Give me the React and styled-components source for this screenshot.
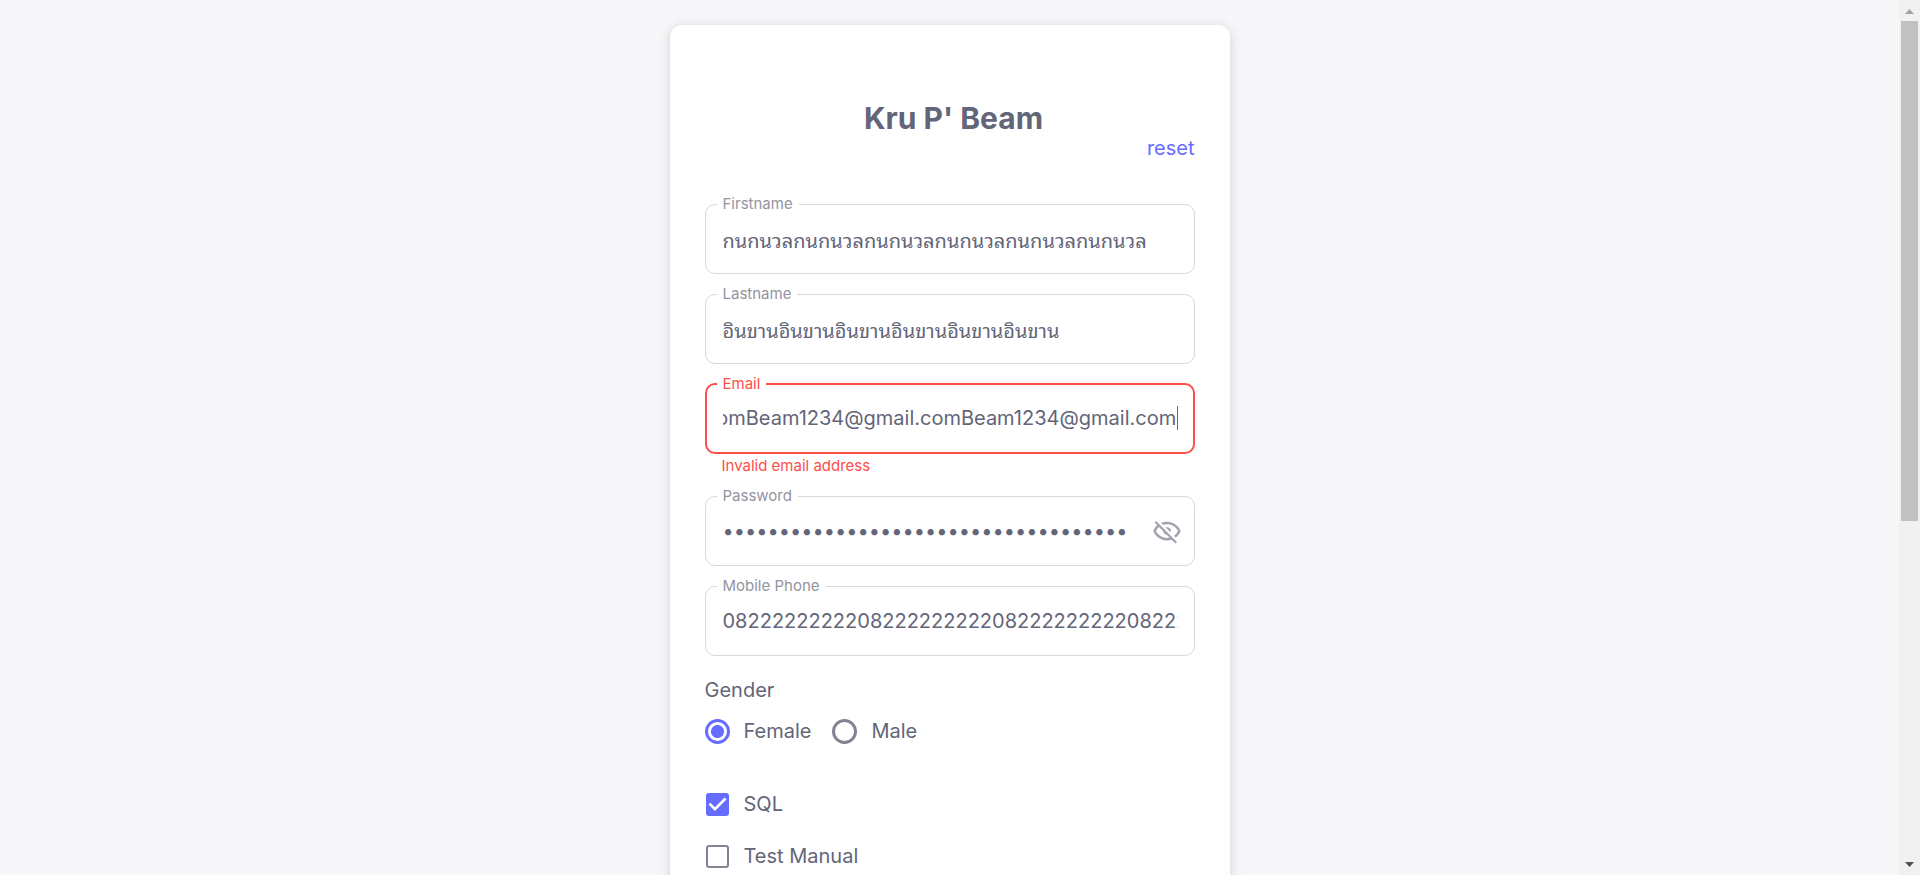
import React, { useLayoutEffect, useRef, useState } from "react";
import styled, { createGlobalStyle, ThemeProvider } from "styled-components";

const theme = {
  primary: "#666cff",
  error: "#ff4d49",
  text: "#636578",
  muted: "#93949f",
  control: "#828393",
  icon: "#a1a2ae",
  outline: "#d8d8dd",
  page: "#f7f7f9",
};

const GlobalStyle = createGlobalStyle`
  *, *::before, *::after { box-sizing: border-box; }
  body {
    margin: 0;
    background: ${theme.page};
    color: ${theme.text};
    font-family: Inter, "Leelawadee UI", "Noto Sans Thai Looped", Loma, Waree, Garuda, sans-serif;
    font-size: 20px;
  }
`;

const Shell = styled.div`
  display: flex;
  height: 100vh;
  overflow: hidden;
`;

const Page = styled.main`
  flex: 1;
  min-width: 0;
  overflow-y: auto;
  scrollbar-width: none;
  padding: 25px;
`;

const Card = styled.form`
  max-width: 560px;
  margin: 0 auto;
  padding: 75px 35px;
  border-radius: 12px;
  background: #fff;
  box-shadow: 0 2px 12px rgba(76, 78, 100, 0.22);
`;

const Header = styled.header`
  display: flex;
  flex-direction: column;
  margin-bottom: 44px;
`;

const Title = styled.h1`
  margin: 0 0 0 8px;
  font-size: 30px;
  font-weight: 700;
  line-height: 36px;
  text-align: center;
`;

const ResetLink = styled.a`
  align-self: flex-end;
  line-height: 24px;
  color: ${(p) => p.theme.primary};
  text-decoration: none;
`;

const Field = styled.div`
  margin-bottom: 20px;
`;

const Outline = styled.fieldset`
  display: flex;
  align-items: center;
  min-width: 0;
  height: 78px;
  margin: -8px 0 0;
  padding: 0 ${(p) => (p.$error ? 15 : 16)}px 8px;
  border: ${(p) => (p.$error ? `2px solid ${p.theme.error}` : `1px solid ${p.theme.outline}`)};
  border-radius: 10px;
`;

const Legend = styled.legend`
  margin-left: -5px;
  padding: 0 6px;
  font-size: 15px;
  line-height: 16px;
  color: ${(p) => (p.$error ? p.theme.error : p.theme.muted)};
`;

const TextInput = styled.input`
  flex: 1;
  min-width: 0;
  width: 100%;
  height: 60px;
  padding: 0 0 0 1px;
  border: 0;
  outline: 0;
  background: transparent;
  color: inherit;
  font: inherit;
  line-height: 24px;
`;

const Row = styled.div`
  display: flex;
  flex: 1;
  align-items: center;
  width: 100%;
`;

const Caret = styled.span`
  width: 1px;
  height: 24px;
  background: ${(p) => p.theme.text};
`;

const IconButton = styled.button`
  display: grid;
  place-items: center;
  width: 30px;
  height: 30px;
  margin: 0 -4px 0 16px;
  padding: 0;
  border: 0;
  background: none;
  color: ${(p) => p.theme.icon};
  cursor: pointer;
`;

const HelperText = styled.p`
  margin: 2px 17px 0;
  font-size: 15px;
  line-height: 20px;
  color: ${(p) => p.theme.error};
`;

const Group = styled.fieldset`
  min-width: 0;
  margin: 0 0 20px;
  padding: 0;
  border: 0;
`;

const GroupLabel = styled.legend`
  padding: 0;
  line-height: 28px;
`;

const Options = styled.div`
  display: flex;
  gap: 21px;
`;

const Option = styled.label`
  display: flex;
  align-items: center;
  gap: 14px;
  height: ${(p) => p.$height}px;
  cursor: pointer;
`;

const Radio = styled.input`
  appearance: none;
  width: 25px;
  height: 25px;
  margin: 0;
  border: 3px solid ${(p) => p.theme.control};
  border-radius: 50%;

  &:checked {
    border-color: ${(p) => p.theme.primary};
    background: radial-gradient(circle, ${(p) => p.theme.primary} 6px, transparent 7px);
  }
`;

const TickBox = styled.span`
  display: grid;
  place-items: center;
  width: 25px;
  height: 25px;

  & > * { grid-area: 1 / 1; }
  & > svg { pointer-events: none; }
`;

const Checkbox = styled.input`
  appearance: none;
  width: 23px;
  height: 23px;
  margin: 0;
  border: 2px solid ${(p) => p.theme.control};
  border-radius: 3px;

  &:checked {
    border-color: ${(p) => p.theme.primary};
    background: ${(p) => p.theme.primary};
  }
`;

const Scrollbar = styled.div`
  display: flex;
  flex-direction: column;
  align-items: center;
  width: 21px;
  background: #f1f1f1;
`;

const ScrollArrow = styled.svg`
  width: 21px;
  height: 21px;
  fill: ${(p) => (p.$active ? "#505050" : "#a3a3a3")};
`;

const Track = styled.div`
  flex: 1;
  width: 17px;
`;

const Thumb = styled.div`
  height: 60%;
  background: #c1c1c1;
`;

function TextField({ id, label, error, caret, action, ...input }) {
  const ref = useRef(null);
  useLayoutEffect(() => {
    if (caret) ref.current.scrollLeft = ref.current.scrollWidth;
  }, [caret]);
  return (
    <Field>
      <Outline $error={Boolean(error)}>
        <Legend $error={Boolean(error)}>
          <label htmlFor={id}>{label}</label>
        </Legend>
        <Row>
          <TextInput id={id} ref={ref} {...input} />
          {caret && <Caret />}
          {action}
        </Row>
      </Outline>
      {error && <HelperText>{error}</HelperText>}
    </Field>
  );
}

function EyeOffIcon() {
  return (
    <svg width="30" height="30" viewBox="0 0 24 24" fill="currentColor" aria-hidden="true">
      <path d="M2,5.27L3.28,4L20,20.72L18.73,22L15.65,18.92C14.5,19.3 13.28,19.5 12,19.5C7,19.5 2.73,16.39 1,12C1.69,10.24 2.79,8.69 4.19,7.46L2,5.27M12,9A3,3 0 0,1 15,12C15,12.35 14.94,12.69 14.83,13L11,9.17C11.31,9.06 11.65,9 12,9M12,4.5C17,4.5 21.27,7.61 23,12C22.18,14.08 20.79,15.88 19,17.19L17.58,15.76C18.94,14.82 20.06,13.54 20.82,12C19.17,8.64 15.76,6.5 12,6.5C10.91,6.5 9.84,6.68 8.84,7L7.3,5.47C8.74,4.85 10.33,4.5 12,4.5M3.18,12C4.83,15.36 8.24,17.5 12,17.5C12.69,17.5 13.37,17.43 14,17.29L11.72,15C10.29,14.85 9.15,13.71 9,12.28L5.6,8.87C4.61,9.72 3.78,10.78 3.18,12Z" />
    </svg>
  );
}

function CheckOption({ label, defaultChecked = false }) {
  const [checked, setChecked] = useState(defaultChecked);
  return (
    <Option $height={52}>
      <TickBox>
        <Checkbox type="checkbox" checked={checked} onChange={(e) => setChecked(e.target.checked)} />
        {checked && (
          <svg width="23" height="23" viewBox="3 3 18 18" fill="#fff" aria-hidden="true">
            <path d="M10 17l-5-5 1.41-1.41L10 14.17l7.59-7.59L19 8l-9 9z" />
          </svg>
        )}
      </TickBox>
      {label}
    </Option>
  );
}

export default function App() {
  const [visible, setVisible] = useState(false);
  return (
    <ThemeProvider theme={theme}>
      <GlobalStyle />
      <Shell>
        <Page>
          <Card>
            <Header>
              <Title>Kru P' Beam</Title>
              <ResetLink href="#reset">reset</ResetLink>
            </Header>
            <TextField id="firstname" label="Firstname" defaultValue={"กนกนวล".repeat(6)} />
            <TextField id="lastname" label="Lastname" defaultValue={"อินขาน".repeat(6)} />
            <TextField
              id="email"
              label="Email"
              caret
              error="Invalid email address"
              defaultValue={"Beam1234@gmail.com".repeat(3)}
            />
            <TextField
              id="password"
              label="Password"
              type={visible ? "text" : "password"}
              defaultValue={"Beam12345678".repeat(3)}
              action={
                <IconButton type="button" aria-label="toggle password visibility" onClick={() => setVisible(!visible)}>
                  <EyeOffIcon />
                </IconButton>
              }
            />
            <TextField id="phone" label="Mobile Phone" type="tel" defaultValue={"08222222222".repeat(4)} />
            <Group>
              <GroupLabel>Gender</GroupLabel>
              <Options>
                <Option $height={54}>
                  <Radio type="radio" name="gender" value="female" defaultChecked />
                  Female
                </Option>
                <Option $height={54}>
                  <Radio type="radio" name="gender" value="male" />
                  Male
                </Option>
              </Options>
            </Group>
            <CheckOption label="SQL" defaultChecked />
            <CheckOption label="Test Manual" />
          </Card>
        </Page>
        <Scrollbar aria-hidden="true">
          <ScrollArrow viewBox="0 0 21 21">
            <path d="M6 14L10.500 9L15 14Z" />
          </ScrollArrow>
          <Track>
            <Thumb />
          </Track>
          <ScrollArrow $active viewBox="0 0 21 21">
            <path d="M6 8L10.500 13L15 8Z" />
          </ScrollArrow>
        </Scrollbar>
      </Shell>
    </ThemeProvider>
  );
}
